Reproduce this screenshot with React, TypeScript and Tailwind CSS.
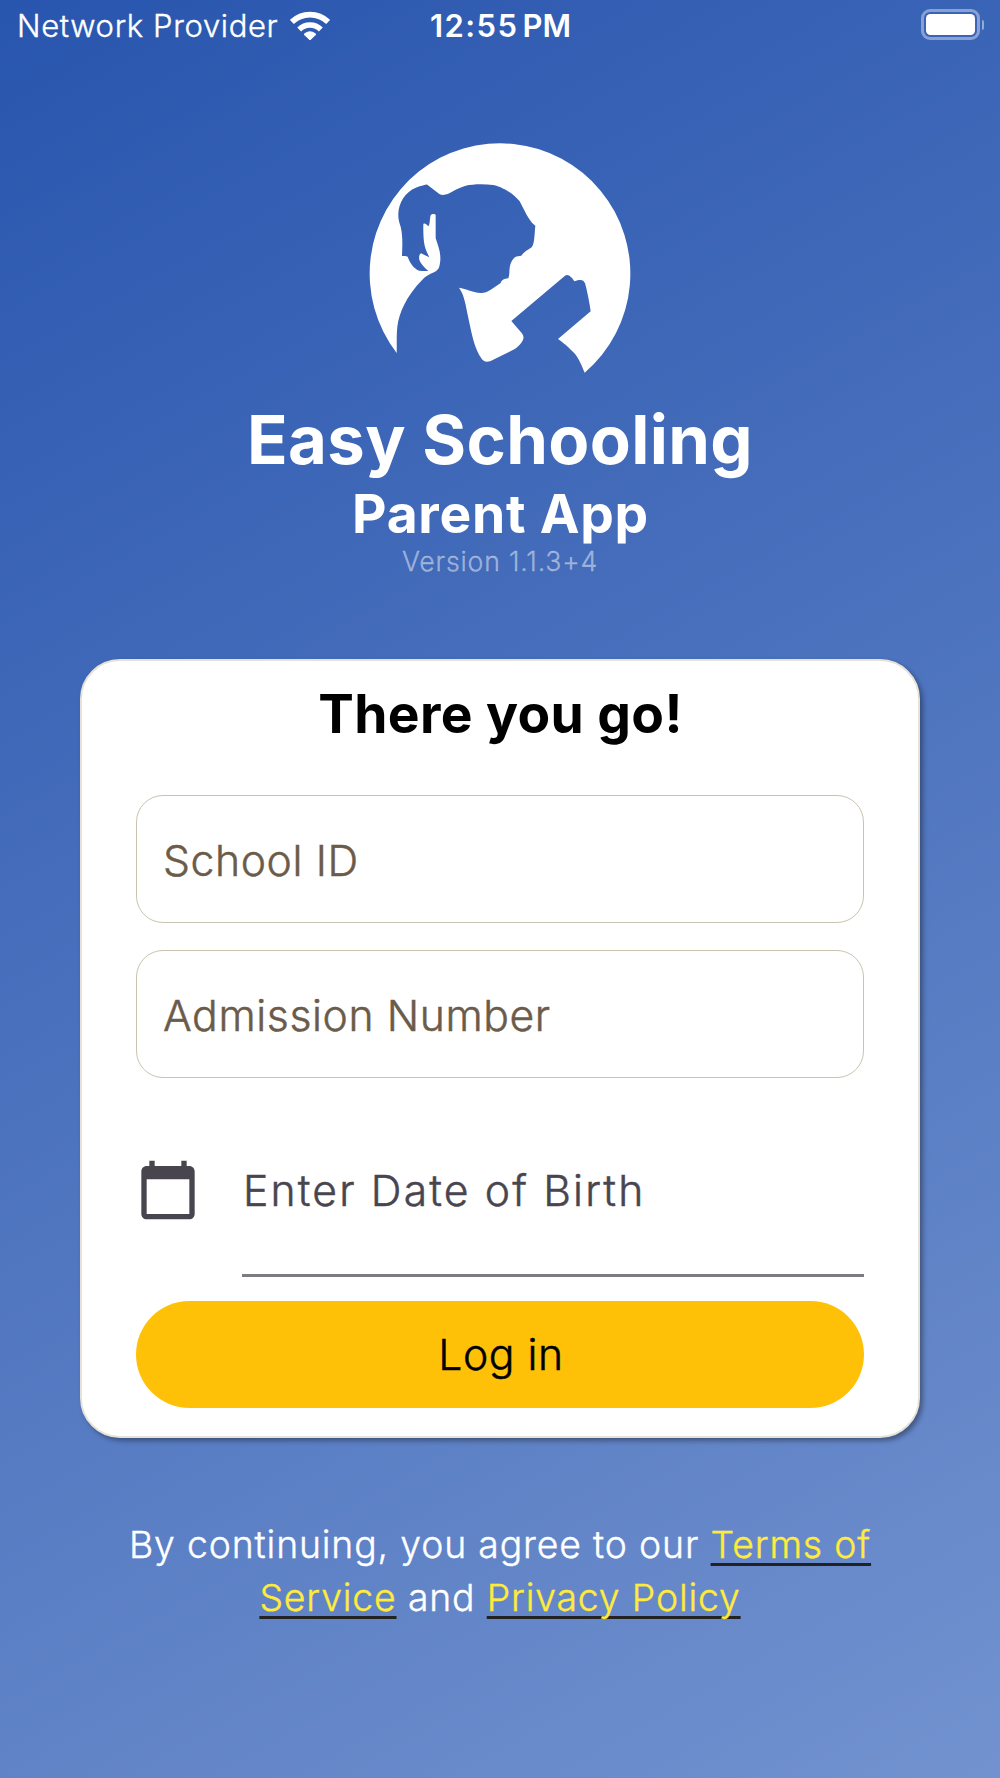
function WifiIcon() {
  return (
    <svg className="ml-[12px] h-[30px] w-[40px]" viewBox="870 30 120 90" fill="none" stroke="#fff">
      <path d="M875.500 63A78 78 0 0 1 984.500 63" strokeWidth="17" />
      <path d="M897.500 85.500A46 46 0 0 1 962.500 85.500" strokeWidth="16.500" />
      <path d="M930 117L912 100A25 25 0 0 1 948 100Z" fill="#fff" strokeWidth="3" strokeLinejoin="round" />
    </svg>
  );
}

function Battery() {
  return (
    <div className="flex items-center gap-[2px]">
      <div className="h-[31px] w-[59px] rounded-[9px] border-[3px] border-white/40 p-[2px]">
        <div className="h-full w-full rounded-[4.500px] bg-white" />
      </div>
      <div className="h-[10px] w-[2px] rounded-r-full bg-white/45" />
    </div>
  );
}

function StatusBar() {
  return (
    <header className="grid h-[51px] grid-cols-3 items-center text-[31px] leading-[50px] text-white">
      <div className="flex items-center pl-[17px]">
        <span className="font-light whitespace-nowrap tracking-[0.640px] [-webkit-text-stroke:0.4px]">Network Provider</span>
        <WifiIcon />
      </div>
      <div className="flex justify-center gap-[4px] pl-[1px] font-semibold">
        <span className="tracking-[1.450px]">12:55</span>
        <span>PM</span>
      </div>
      <div className="flex justify-end pr-[16px] pb-[2px]">
        <Battery />
      </div>
    </header>
  );
}

function Logo() {
  return (
    <svg className="mr-[2px] h-[260px] w-[300px]" viewBox="0 0 900 780" fill="#fff">
      <path
        d="M143 669A391 391 0 1 1 707 728C695 700 688 680 670 664C655 648 645 640 627 627L725 544
        C722 520 714 480 708 460C704 450 696 447 676 454C670 444 658 430 648 437L487 573L518 609
        C526 619 525 628 517 638C505 653 500 655 490 661L425 693C412 697 405 695 399 688
        C375 655 368 610 355 550C348 510 342 490 330 473C350 476 375 488 395 489C415 490 430 476 455 459
        C460 447 465 448 478 445C484 430 478 415 487 396C495 380 502 378 517 377C528 362 535 362 548 352
        C557 340 556 315 559 287C545 278 535 260 512 214C490 185 450 168 432 165C405 161 370 162 350 167
        C320 176 305 190 292 193C280 196 275 195 268 190L235 164C229 163 222 168 212 169
        C180 178 155 205 149 240C146 265 150 275 155 290C162 320 160 345 159 378C166 378 172 377 176 380
        C185 405 200 422 218 423L238 423C225 412 214 400 211 390C209 378 212 372 216 370L241 382
        C228 355 222 345 223 282C227 279 231 282 238 289C243 285 242 265 245 256C248 251 258 251 260 255
        L260 325C268 350 275 365 274 390C272 415 268 420 255 427C240 434 230 438 220 449
        C170 500 150 550 145 590C142 620 144 640 143 669Z"
      />
    </svg>
  );
}

function CalendarIcon() {
  return (
    <svg className="h-[64px] w-[64px]" viewBox="0 0 24 24" fill="#49454f">
      <path d="M20 3h-1V1h-2v2H7V1H5v2H4c-1.100 0-2 .9-2 2v16c0 1.100.9 2 2 2h16c1.100 0 2-.9 2-2V5c0-1.100-.9-2-2-2zm0 18H4V8h16v13z" />
    </svg>
  );
}

function Field({ label }: { label: string }) {
  return (
    <div className="flex h-[128px] items-center rounded-[27px] border border-[#c9c4b0] pt-[4px] pl-[26px] text-[42.670px] font-light tracking-[0.6px] text-[#6b5b4a] [-webkit-text-stroke:0.5px]">
      {label}
    </div>
  );
}

const link =
  "text-[#ffeb3b] underline decoration-[#222222] decoration-[3px] underline-offset-[5px] [text-decoration-skip-ink:none]";

export default function App() {
  return (
    <main className="flex h-[1778px] w-[1000px] flex-col overflow-hidden bg-[linear-gradient(150.64deg,#2855ae,#7292cf)] font-['Inter',sans-serif]">
      <StatusBar />
      <section className="flex flex-col items-center pt-[79px] text-white">
        <Logo />
        <h1 className="mt-[10px] text-[67px] leading-[80px] font-bold tracking-[0.370px]">Easy Schooling</h1>
        <h2 className="mt-[4px] ml-[1px] text-[53.330px] leading-[60px] font-bold tracking-[0.750px]">Parent App</h2>
        <p className="mt-[2px] text-[26.670px] leading-[30px] font-light tracking-[0.820px] text-white/45 [-webkit-text-stroke:0.3px]">
          Version 1.1.3+4
        </p>
      </section>

      <section className="mx-[80px] mt-[83px] flex h-[779px] flex-col rounded-[40px] border-2 border-[#e6e2d8] bg-white px-[54px] shadow-[3px_3px_5px_rgba(0,0,0,0.350)]">
        <h3 className="mt-[23px] ml-[1px] text-center text-[53.330px] leading-[60px] font-bold tracking-[0.4px] text-black">There you go!</h3>
        <div className="mt-[51px] flex flex-col gap-[27px]">
          <Field label="School ID" />
          <Field label="Admission Number" />
        </div>
        <div className="mt-[61px] flex">
          <div className="mt-[19px] w-[106px]">
            <CalendarIcon />
          </div>
          <div className="h-[138px] flex-1 border-b-[3px] border-[#7d7a83] pt-[22px] pl-[1px] text-[42.670px] leading-[60px] font-light tracking-[2.150px] text-[#49454f] [-webkit-text-stroke:0.5px]">
            Enter Date of Birth
          </div>
        </div>
        <button className="mt-[24px] h-[107px] rounded-full bg-[#ffc107] pl-[2px] text-[42.670px] font-light tracking-[0.550px] text-black [-webkit-text-stroke:0.5px]">
          Log in
        </button>
      </section>

      <footer className="mt-[80px] text-center text-[37.330px] leading-[53.330px] font-light whitespace-nowrap text-white [-webkit-text-stroke:0.4px]">
        <p className="tracking-[0.860px]">
          By continuing, you agree to our <a className={link}>Terms of</a>
        </p>
        <p className="tracking-[0.850px]">
          <a className={link}>Service</a> and <a className={link}>Privacy Policy</a>
        </p>
      </footer>
    </main>
  );
}
